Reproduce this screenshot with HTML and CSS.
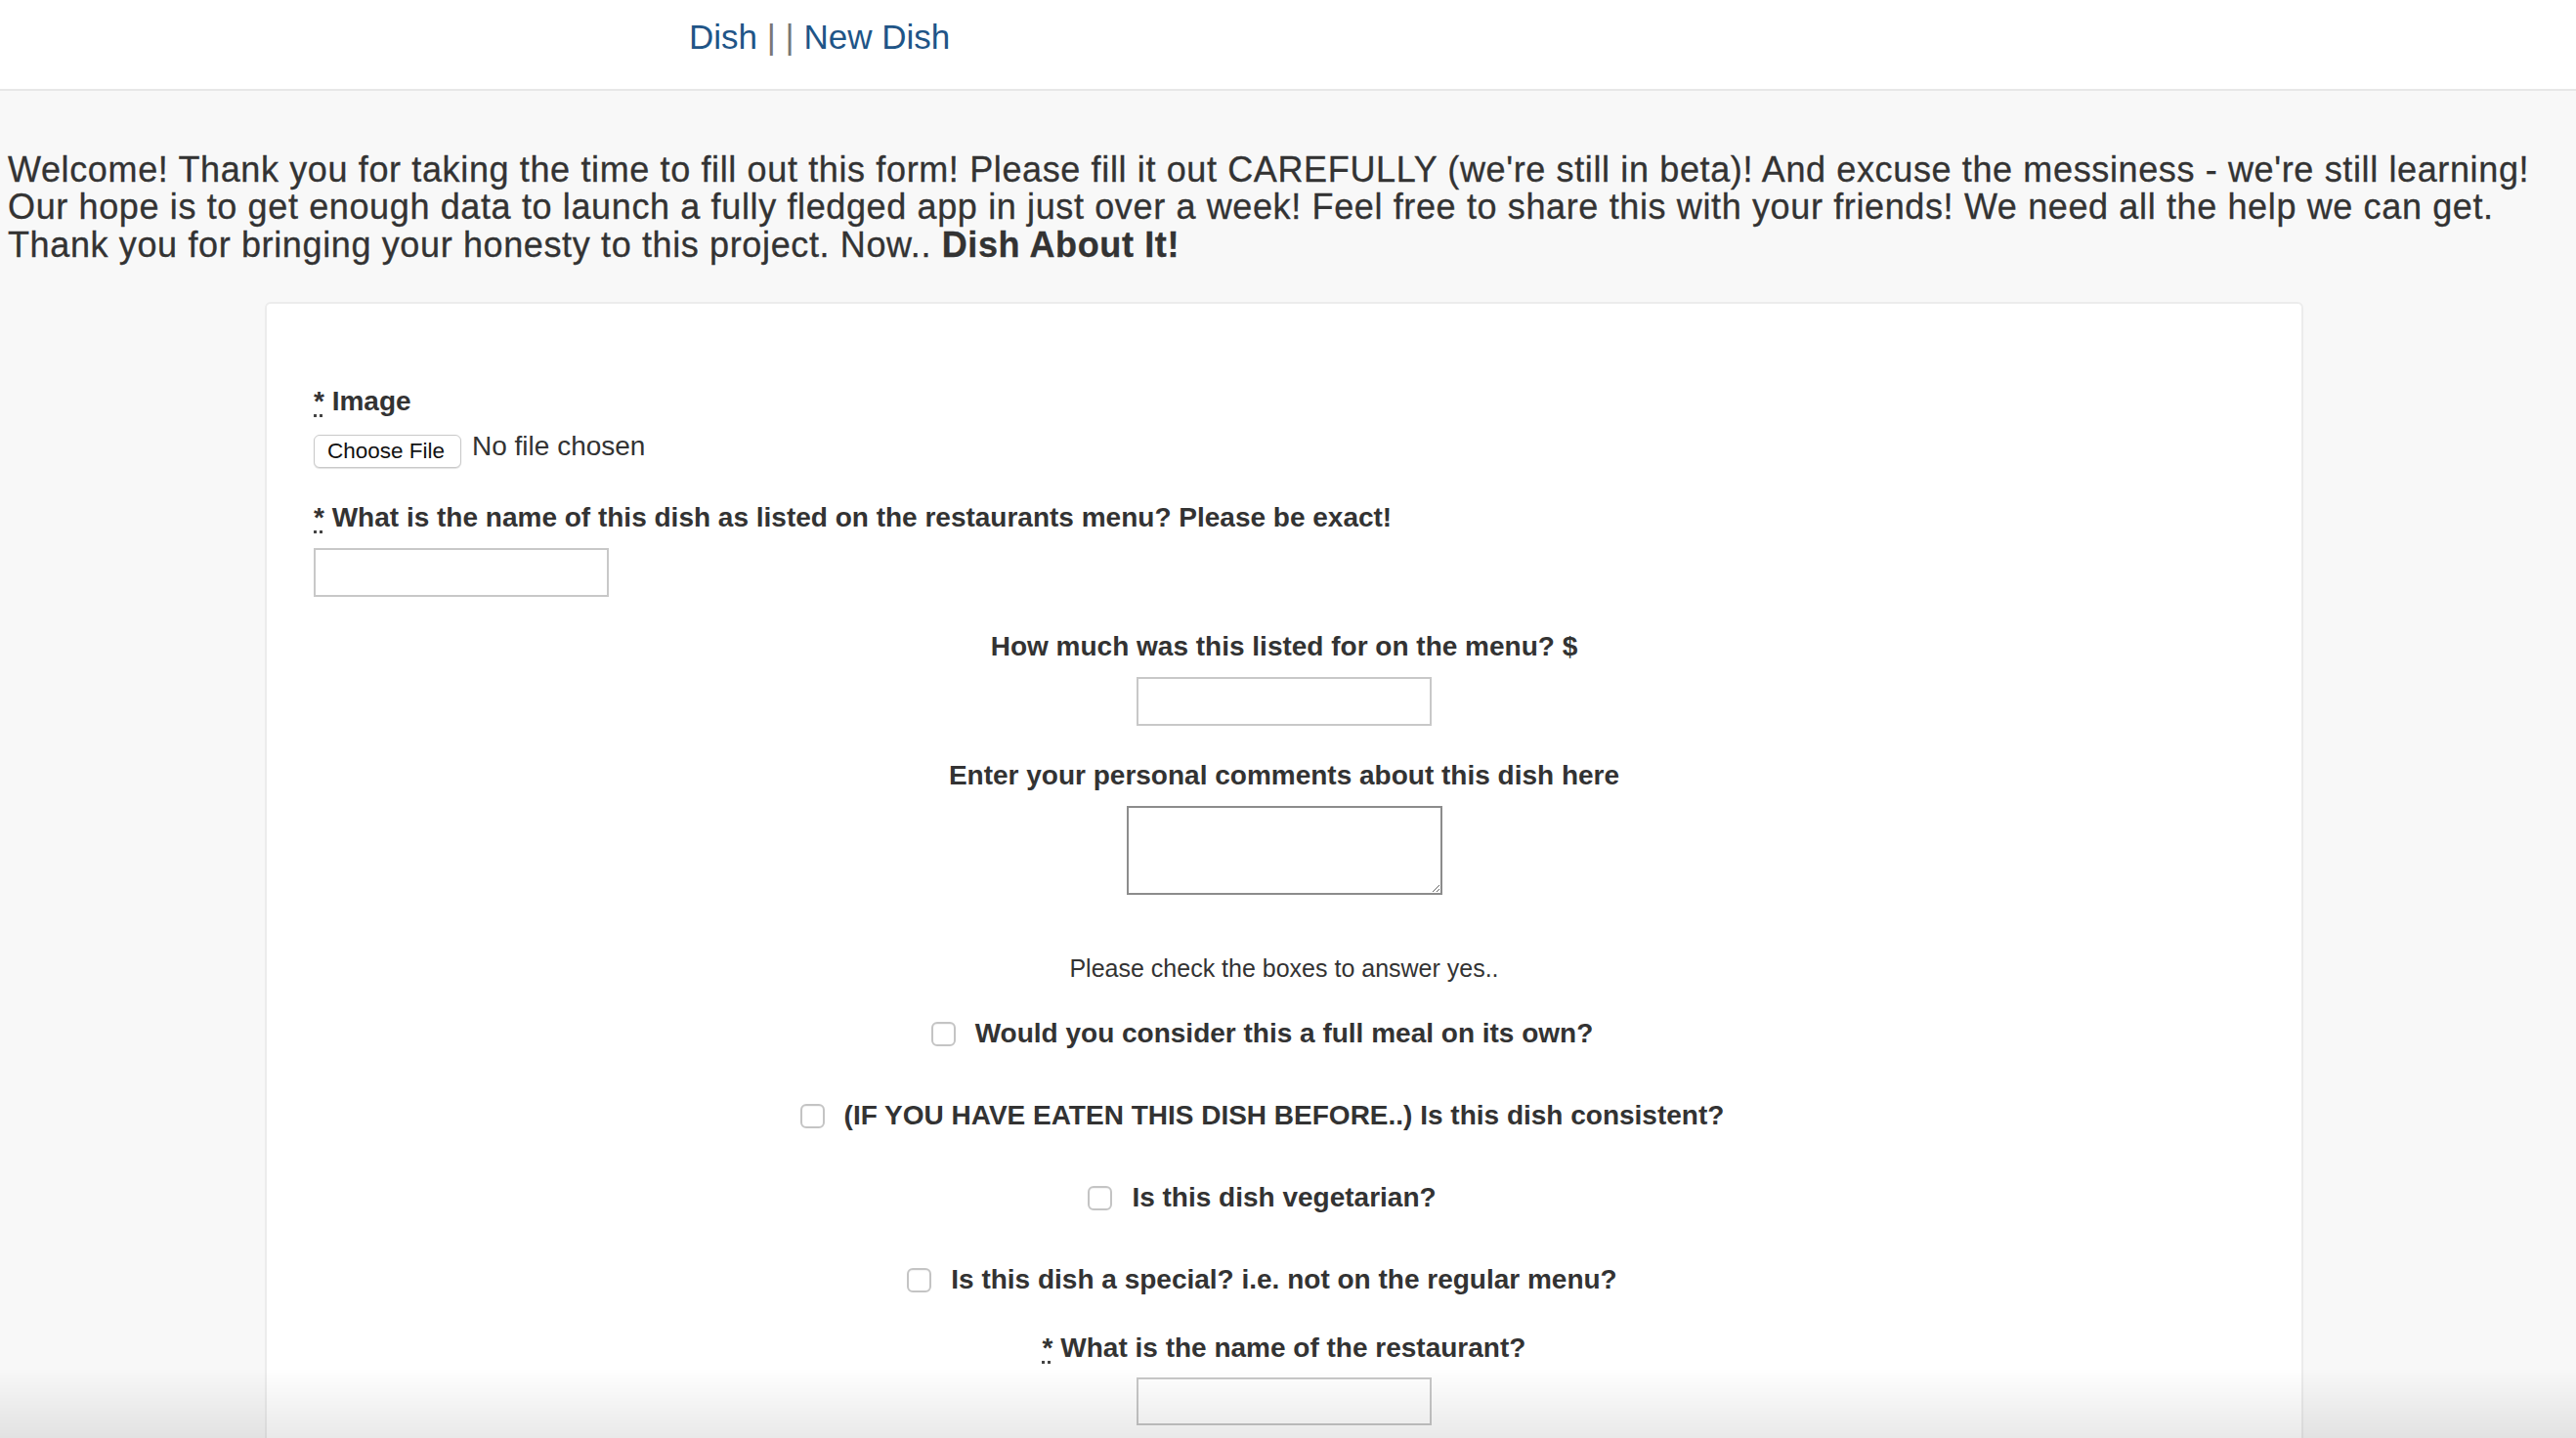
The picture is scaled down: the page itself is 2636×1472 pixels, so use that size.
FILE: index.html
```html
<!DOCTYPE html>
<html lang="en">
<head>
<meta charset="utf-8">
<title>New Dish</title>
<link rel="stylesheet" href="styles.css">
</head>
<body>
<header class="topbar">
  <nav class="nav">
    <a class="nav-link" href="#">Dish</a> <span class="sep">|</span> <span class="sep">|</span> <a class="nav-link" href="#">New Dish</a>
  </nav>
</header>
<main class="page">
  <p class="intro">Welcome! Thank you for taking the time to fill out this form! Please fill it out CAREFULLY (we're still in beta)! And excuse the messiness - we're still learning!<br>Our hope is to get enough data to launch a fully fledged app in just over a week! Feel free to share this with your friends! We need all the help we can get.<br>Thank you for bringing your honesty to this project. Now.. <strong>Dish About It!</strong></p>

  <form class="card">
    <div class="field">
      <label class="label"><abbr title="required">*</abbr> Image</label>
      <div class="file-row">
        <button type="button" class="file-btn">Choose File</button>
        <span class="file-name">No file chosen</span>
      </div>
    </div>

    <div class="field field-gap">
      <label class="label"><abbr title="required">*</abbr> What is the name of this dish as listed on the restaurants menu? Please be exact!</label>
      <input class="text-input" type="text">
    </div>

    <div class="centered">
      <div class="field field-gap">
        <label class="label">How much was this listed for on the menu? $</label>
        <input class="text-input" type="text">
      </div>

      <div class="field field-gap-sm">
        <label class="label">Enter your personal comments about this dish here</label>
        <textarea class="comments"></textarea>
      </div>

      <p class="hint">Please check the boxes to answer yes..</p>

      <div class="check-list">
        <label class="check"><input type="checkbox" class="box"><span>Would you consider this a full meal on its own?</span></label>
        <label class="check"><input type="checkbox" class="box"><span>(IF YOU HAVE EATEN THIS DISH BEFORE..) Is this dish consistent?</span></label>
        <label class="check"><input type="checkbox" class="box"><span>Is this dish vegetarian?</span></label>
        <label class="check"><input type="checkbox" class="box"><span>Is this dish a special? i.e. not on the regular menu?</span></label>
      </div>

      <div class="field field-last">
        <label class="label"><abbr title="required">*</abbr> What is the name of the restaurant?</label>
        <input class="text-input text-input-last" type="text">
      </div>
    </div>
  </form>
</main>
<div class="bottom-fade"></div>
</body>
</html>
```

FILE: styles.css
```css
* {
  box-sizing: border-box;
}

html,
body {
  margin: 0;
  padding: 0;
}

body {
  background: #f8f8f8;
  font-family: "Liberation Sans", Arial, sans-serif;
  color: #333;
  overflow: hidden;
  height: 1472px;
}

.topbar {
  height: 93px;
  background: #fff;
  border-bottom: 2px solid #e7e7e7;
  padding: 18px 0 0 705px;
}

.nav {
  font-size: 35px;
  line-height: 40px;
  color: #777;
  white-space: nowrap;
}

.nav-link {
  color: #1f5587;
  text-decoration: none;
}

.page {
  padding: 0 8px;
}

.intro {
  margin: 62px 0 0;
  font-size: 36px;
  line-height: 38.3px;
  letter-spacing: 0.63px;
  white-space: nowrap;
  -webkit-text-stroke: 0.3px #333;
}

.intro strong {
  font-weight: bold;
}

.card {
  margin: 39px 0 0 263px;
  width: 2086px;
  min-height: 1200px;
  background: #fff;
  border: 2px solid #ececec;
  border-radius: 6px;
  padding: 80px 48px 0;
}

.field {
  display: block;
}

.field-gap {
  margin-top: 31px;
}

.field-gap-sm {
  margin-top: 31px;
}

.field-last {
  margin-top: 30px;
}

.label {
  display: block;
  font-size: 28px;
  line-height: 40px;
  font-weight: bold;
  color: #333;
}

.label abbr {
  text-decoration: underline dotted #444;
  text-decoration-thickness: 3px;
  text-underline-offset: 4px;
}

.file-row {
  display: flex;
  align-items: center;
  gap: 11px;
  margin-top: 14px;
  height: 34px;
}

.file-btn {
  width: 151px;
  height: 34px;
  padding: 0 0 0 13px;
  text-align: left;
  font-family: "Liberation Sans", Arial, sans-serif;
  font-size: 22.5px;
  color: #111;
  background: #fff;
  border: 1px solid #c9c9c9;
  border-radius: 6px;
  box-shadow: 0 1px 1px rgba(0, 0, 0, 0.12);
}

.file-name {
  font-size: 28px;
  line-height: 34px;
  margin-bottom: 9px;
  color: #333;
}

.text-input {
  display: block;
  width: 302px;
  height: 50px;
  margin-top: 11px;
  border: 2px solid #c8c8c8;
  background: #fff;
  font-size: 26px;
}

.text-input-last {
  margin-top: 10px;
  height: 49px;
}

.centered {
  text-align: center;
}

.centered .text-input {
  margin-left: auto;
  margin-right: auto;
}

.comments {
  display: block;
  width: 323px;
  height: 91px;
  margin: 11px auto 0;
  border: 2px solid #8c8c8c;
  background: #fff;
  font-size: 24px;
  resize: both;
}

.hint {
  margin: 57.5px 0 0;
  font-size: 25px;
  line-height: 36px;
  color: #333;
}

.check-list {
  display: flex;
  flex-direction: column;
  align-items: center;
  gap: 44px;
  margin-top: 29px;
}

.check {
  display: flex;
  align-items: center;
  height: 40px;
  font-size: 28px;
  line-height: 40px;
  font-weight: bold;
  color: #333;
}

.box {
  appearance: none;
  -webkit-appearance: none;
  width: 25px;
  height: 25px;
  margin: 0 20px 0 -45px;
  flex: none;
  background: #fff;
  border: 2px solid #c4c4c4;
  border-radius: 6px;
  box-shadow: inset 0 1px 1px rgba(0, 0, 0, 0.05);
}

.bottom-fade {
  position: fixed;
  left: 0;
  right: 0;
  bottom: 0;
  height: 72px;
  background: linear-gradient(rgba(0, 0, 0, 0), rgba(0, 0, 0, 0.085));
  pointer-events: none;
}
```
